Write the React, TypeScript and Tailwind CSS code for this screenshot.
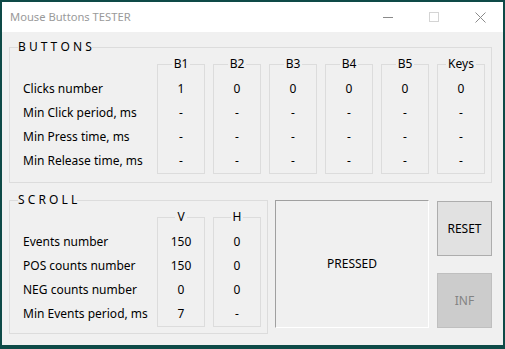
import React from "react";

const btnRows = [
  { label: "Clicks number", values: ["1", "0", "0", "0", "0", "0"] },
  { label: "Min Click period, ms", values: ["-", "-", "-", "-", "-", "-"] },
  { label: "Min Press time, ms", values: ["-", "-", "-", "-", "-", "-"] },
  { label: "Min Release time, ms", values: ["-", "-", "-", "-", "-", "-"] },
];
const btnCols = ["B1", "B2", "B3", "B4", "B5", "Keys"];

const scrollRows = [
  { label: "Events number", values: ["150", "0"] },
  { label: "POS counts number", values: ["150", "0"] },
  { label: "NEG counts number", values: ["0", "0"] },
  { label: "Min Events period, ms", values: ["7", "-"] },
];
const scrollCols = ["V", "H"];

const Column = ({ title, values }: { title: string; values: string[] }) => (
  <fieldset className="w-[48px] border border-[#dcdcdc] pt-[6px]">
    <legend className="mx-auto px-[2px] leading-[14px]">{title}</legend>
    {values.map((v, i) => (
      <div key={i} className="flex items-center justify-center h-[24px]">
        {v}
      </div>
    ))}
  </fieldset>
);

export default function App() {
  return (
    <div className="w-[505px] h-[349px] bg-[#0e4a47] pl-[2px] pt-[2px] text-[12px] text-black" style={{ fontFamily: '"Noto Sans", sans-serif' }}>
      <div className="w-[501px] h-[343px] bg-[#f0f0f0] flex flex-col">
        {/* Title bar */}
        <div className="h-[30px] bg-white flex items-center">
          <span className="ml-[8px] text-[11.2px] text-[#9a9a9a]">Mouse Buttons TESTER</span>
          <div className="ml-auto flex items-center h-full">
            <div className="w-[46px] flex justify-center">
              <div className="w-[10px] h-px bg-[#8a8a8a]" />
            </div>
            <div className="w-[46px] flex justify-center">
              <div className="w-[10px] h-[10px] border border-[#d4d4d4]" />
            </div>
            <div className="w-[46px] flex justify-center">
              <svg width="11" height="11" viewBox="0 0 11 11">
                <path d="M0.5 0.5 L10.5 10.5 M10.5 0.5 L0.5 10.5" stroke="#8a8a8a" strokeWidth="1" />
              </svg>
            </div>
          </div>
        </div>

        {/* Content */}
        <div className="flex flex-col pl-[7px] pt-[8px]">
          {/* BUTTONS */}
          <fieldset className="w-[483px] h-[143px] border border-[#dcdcdc]">
            <legend className="ml-[8px] leading-[14px]">B U T T O N S</legend>
            <div className="flex pt-[3px]">
              <div className="w-[147px] pl-[13px] pt-[20px] flex flex-col">
                {btnRows.map((r) => (
                  <div key={r.label} className="h-[24px] flex items-center">
                    {r.label}
                  </div>
                ))}
              </div>
              <div className="flex gap-[8px]">
                {btnCols.map((c, ci) => (
                  <Column key={c} title={c} values={btnRows.map((r) => r.values[ci])} />
                ))}
              </div>
            </div>
          </fieldset>

          <div className="flex mt-[10px]">
            {/* SCROLL */}
            <fieldset className="w-[259px] h-[141px] border border-[#dcdcdc]">
              <legend className="ml-[8px] leading-[14px]">S C R O L L</legend>
              <div className="flex pt-[3px]">
                <div className="w-[147px] pl-[13px] pt-[20px] flex flex-col">
                  {scrollRows.map((r) => (
                    <div key={r.label} className="h-[24px] flex items-center">
                      {r.label}
                    </div>
                  ))}
                </div>
                <div className="flex gap-[8px]">
                  {scrollCols.map((c, ci) => (
                    <Column key={c} title={c} values={scrollRows.map((r) => r.values[ci])} />
                  ))}
                </div>
              </div>
            </fieldset>

            {/* Status */}
            <div className="ml-[7px] mt-[7px] w-[154px] h-[128px] border border-t-[#a0a0a0] border-l-[#a0a0a0] border-b-white border-r-white flex items-center justify-center">
              PRESSED
            </div>

            <div className="ml-[8px] mt-[8px] flex flex-col gap-[17px]">
              <button className="w-[55px] h-[55px] bg-[#e1e1e1] border border-[#adadad]">RESET</button>
              <button className="w-[55px] h-[55px] bg-[#cccccc] border border-[#bfbfbf] text-[#838383]">INF</button>
            </div>
          </div>
        </div>
      </div>
    </div>
  );
}
